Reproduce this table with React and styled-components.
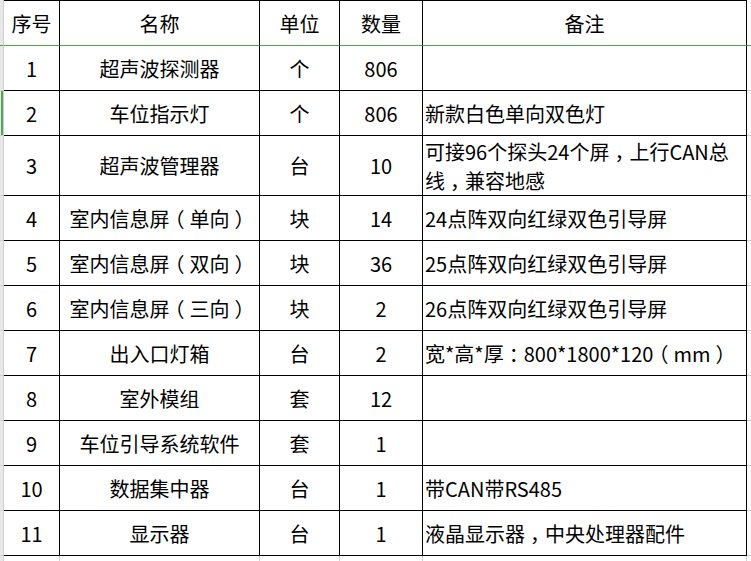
import React from 'react';
import styled, { createGlobalStyle } from 'styled-components';

const GREEN = '#55a355';
const GRID = '#d0d0d0';

const GlobalStyle = createGlobalStyle`
  html, body { margin: 0; padding: 0; background: #fff; }
  body {
    font-family: "Noto Sans CJK SC", "Noto Sans", "Liberation Sans", sans-serif;
    color: #000;
  }
`;

const Sheet = styled.div`
  width: 751px;
  height: 561px;
  overflow: hidden;
  display: flex;
  flex-direction: column;
  background: #fff;
`;

const Row = styled.div`
  display: grid;
  grid-template-columns: 4px 56px 200px 80px 83px 324px 1fr;
  height: ${p => p.$h}px;
  flex: none;
`;

const RowHead = styled.div`
  background: #e8e8e8;
  border-right: 1px solid ${GRID};
  border-bottom: 1px solid ${p => (p.$header ? GREEN : p.$last ? 'transparent' : GRID)};
  box-shadow: ${p => (p.$selected ? `inset -2px 0 0 ${GREEN}` : 'none')};
`;

const Cell = styled.div`
  display: flex;
  align-items: center;
  justify-content: ${p => (p.$left ? 'flex-start' : 'center')};
  padding-left: ${p => (p.$left ? '2px' : '0')};
  padding-top: 1px;
  border-right: 1px solid #000;
  border-bottom: 1px solid ${p => (p.$header ? GREEN : '#000')};
  border-top: ${p => (p.$header ? '1px solid #000' : 'none')};
  font-size: 20px;
  line-height: 28px;
  white-space: nowrap;
  overflow: hidden;
`;

const Lines = styled.div`
  display: flex;
  flex-direction: column;
  line-height: 29px;
`;

const Punct = styled.span`
  display: inline-block;
  width: 1em;
  text-align: center;
  font-feature-settings: "halt" 1;
`;

const Filler = styled.div`
  border-bottom: 1px solid ${p => (p.$header ? GREEN : GRID)};
`;

const Tick = styled.div`
  border-right: 1px solid ${GRID};
`;

const headers = ['序号', '名称', '单位', '数量', '备注'];

const rows = [
  ['1', '超声波探测器', '个', '806', ''],
  ['2', '车位指示灯', '个', '806', '新款白色单向双色灯'],
  ['3', '超声波管理器', '台', '10', ['可接96个探头24个屏，上行CAN总', '线，兼容地感']],
  ['4', '室内信息屏（单向）', '块', '14', '24点阵双向红绿双色引导屏'],
  ['5', '室内信息屏（双向）', '块', '36', '25点阵双向红绿双色引导屏'],
  ['6', '室内信息屏（三向）', '块', '2', '26点阵双向红绿双色引导屏'],
  ['7', '出入口灯箱', '台', '2', '宽*高*厚：800*1800*120（mm）'],
  ['8', '室外模组', '套', '12', ''],
  ['9', '车位引导系统软件', '套', '1', ''],
  ['10', '数据集中器', '台', '1', '带CAN带RS485'],
  ['11', '显示器', '台', '1', '液晶显示器，中央处理器配件'],
];

function Text({ value }) {
  const parts = value.split(/([（），：])/).filter(Boolean);
  return parts.map((p, i) =>
    /^[（），：]$/.test(p) ? <Punct key={i}>{p}</Punct> : <React.Fragment key={i}>{p}</React.Fragment>
  );
}

export default function App() {
  return (
    <>
      <GlobalStyle />
      <Sheet>
        <Row $h={46}>
          <RowHead $header />
          {headers.map(h => (
            <Cell key={h} $header>{h}</Cell>
          ))}
          <Filler $header />
        </Row>
        {rows.map((r, i) => {
          const multi = Array.isArray(r[4]);
          return (
            <Row key={r[0]} $h={multi ? 60 : 45}>
              <RowHead $selected={i === 1} />
              <Cell>{r[0]}</Cell>
              <Cell><Text value={r[1]} /></Cell>
              <Cell>{r[2]}</Cell>
              <Cell>{r[3]}</Cell>
              <Cell $left>
                {multi ? (
                  <Lines>
                    {r[4].map(l => (
                      <span key={l}><Text value={l} /></span>
                    ))}
                  </Lines>
                ) : (
                  <Text value={r[4]} />
                )}
              </Cell>
              <Filler />
            </Row>
          );
        })}
        <Row $h={10}>
          <RowHead $last />
          <Tick />
          <Tick />
          <Tick />
          <Tick />
          <Tick />
          <div />
        </Row>
      </Sheet>
    </>
  );
}
